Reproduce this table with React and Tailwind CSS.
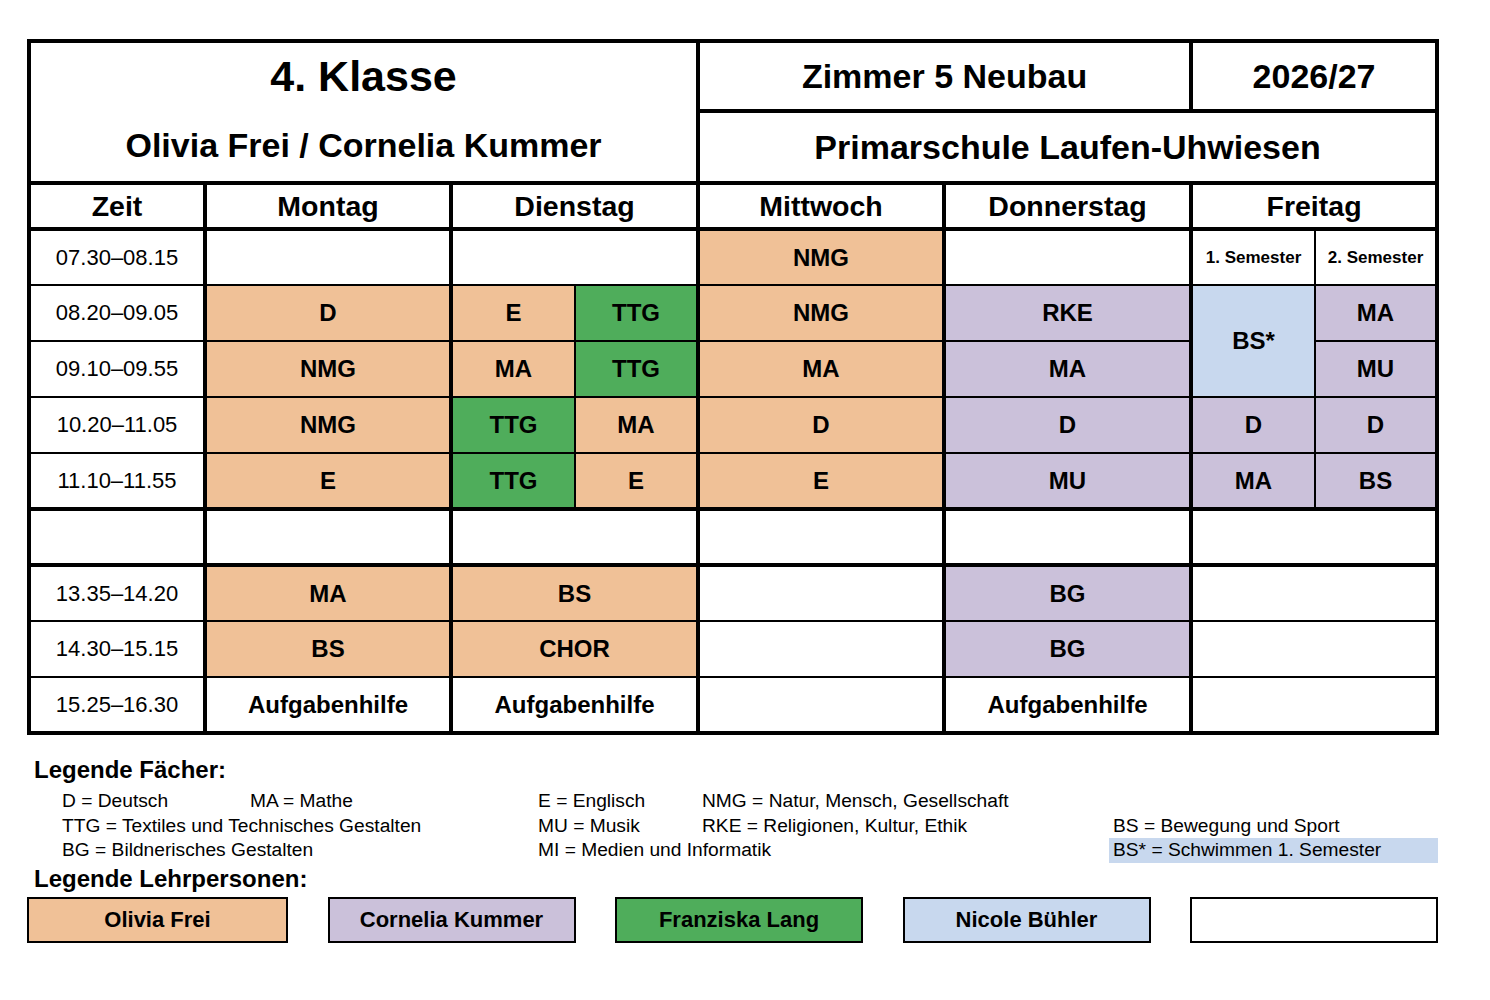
import React from "react";

// Stundenplan 4. Klasse - Primarschule Laufen-Uhwiesen

const O = "bg-[#f0c197]"; // Olivia Frei
const L = "bg-[#cbc1da]"; // Cornelia Kummer
const G = "bg-[#4fad5b]"; // Franziska Lang
const B = "bg-[#c8d8ee]"; // Nicole Bühler
const W = "bg-white";

// vertical borders: whole day column, left half, right half
const X = "border-x-4";
const XL = "border-l-4 border-r-2";
const XR = "border-l-2 border-r-4";

function Cell({ bg = W, x = X, thick, span, rows, small, children }) {
  return (
    <td
      colSpan={span}
      rowSpan={rows}
      className={`${x} ${thick ? "border-t-2 border-b-4" : "border-y-2"} border-black ${bg} text-center align-middle font-bold leading-none ${
        small ? "text-[17px]" : "text-[24px]"
      }`}
    >
      {children}
    </td>
  );
}

function Time({ children, thick }) {
  return (
    <td
      className={`border-x-4 ${thick ? "border-t-2 border-b-4" : "border-y-2"} border-black bg-white text-center align-middle text-[22px] leading-none h-[56px]`}
    >
      {children}
    </td>
  );
}

function Day({ span, children }) {
  return (
    <td colSpan={span} className="border-4 border-black text-center align-middle text-[28.5px] font-bold leading-none h-[46px]">
      {children}
    </td>
  );
}

function Timetable() {
  return (
    <table className="table-fixed border-collapse border-4 border-black w-[1412px]">
      <colgroup>
        <col className="w-[176px]" />
        <col className="w-[246px]" />
        <col className="w-[124px]" />
        <col className="w-[123px]" />
        <col className="w-[246px]" />
        <col className="w-[247px]" />
        <col className="w-[124px]" />
        <col className="w-[122px]" />
      </colgroup>
      <tbody>
        <tr>
          <td colSpan={4} rowSpan={2} className="border-4 border-black align-top p-0">
            <div className="h-[66px] flex items-center justify-center text-[43px] font-bold">4. Klasse</div>
            <div className="h-[72px] flex items-center justify-center text-[34px] font-bold">Olivia Frei / Cornelia Kummer</div>
          </td>
          <td colSpan={2} className="border-4 border-black text-center align-middle text-[34px] font-bold h-[70px] leading-none">
            Zimmer 5 Neubau
          </td>
          <td colSpan={2} className="border-4 border-black text-center align-middle text-[34px] font-bold leading-none">
            2026/27
          </td>
        </tr>
        <tr>
          <td colSpan={4} className="border-4 border-black text-center align-middle text-[34px] font-bold h-[72px] leading-none">
            Primarschule Laufen-Uhwiesen
          </td>
        </tr>
        <tr>
          <Day>Zeit</Day>
          <Day>Montag</Day>
          <Day span={2}>Dienstag</Day>
          <Day>Mittwoch</Day>
          <Day>Donnerstag</Day>
          <Day span={2}>Freitag</Day>
        </tr>

        <tr>
          <Time>07.30–08.15</Time>
          <Cell />
          <Cell span={2} />
          <Cell bg={O}>NMG</Cell>
          <Cell />
          <Cell x={XL} small>1. Semester</Cell>
          <Cell x={XR} small>2. Semester</Cell>
        </tr>
        <tr>
          <Time>08.20–09.05</Time>
          <Cell bg={O}>D</Cell>
          <Cell bg={O} x={XL}>E</Cell>
          <Cell bg={G} x={XR}>TTG</Cell>
          <Cell bg={O}>NMG</Cell>
          <Cell bg={L}>RKE</Cell>
          <Cell bg={B} x={XL} rows={2}>BS*</Cell>
          <Cell bg={L} x={XR}>MA</Cell>
        </tr>
        <tr>
          <Time>09.10–09.55</Time>
          <Cell bg={O}>NMG</Cell>
          <Cell bg={O} x={XL}>MA</Cell>
          <Cell bg={G} x={XR}>TTG</Cell>
          <Cell bg={O}>MA</Cell>
          <Cell bg={L}>MA</Cell>
          <Cell bg={L} x={XR}>MU</Cell>
        </tr>
        <tr>
          <Time>10.20–11.05</Time>
          <Cell bg={O}>NMG</Cell>
          <Cell bg={G} x={XL}>TTG</Cell>
          <Cell bg={O} x={XR}>MA</Cell>
          <Cell bg={O}>D</Cell>
          <Cell bg={L}>D</Cell>
          <Cell bg={L} x={XL}>D</Cell>
          <Cell bg={L} x={XR}>D</Cell>
        </tr>
        <tr>
          <Time thick>11.10–11.55</Time>
          <Cell bg={O} thick>E</Cell>
          <Cell bg={G} x={XL} thick>TTG</Cell>
          <Cell bg={O} x={XR} thick>E</Cell>
          <Cell bg={O} thick>E</Cell>
          <Cell bg={L} thick>MU</Cell>
          <Cell bg={L} x={XL} thick>MA</Cell>
          <Cell bg={L} x={XR} thick>BS</Cell>
        </tr>
        <tr>
          <Time thick></Time>
          <Cell thick />
          <Cell span={2} thick />
          <Cell thick />
          <Cell thick />
          <Cell span={2} thick />
        </tr>
        <tr>
          <Time>13.35–14.20</Time>
          <Cell bg={O}>MA</Cell>
          <Cell bg={O} span={2}>BS</Cell>
          <Cell />
          <Cell bg={L}>BG</Cell>
          <Cell span={2} />
        </tr>
        <tr>
          <Time>14.30–15.15</Time>
          <Cell bg={O}>BS</Cell>
          <Cell bg={O} span={2}>CHOR</Cell>
          <Cell />
          <Cell bg={L}>BG</Cell>
          <Cell span={2} />
        </tr>
        <tr>
          <Time>15.25–16.30</Time>
          <Cell>Aufgabenhilfe</Cell>
          <Cell span={2}>Aufgabenhilfe</Cell>
          <Cell />
          <Cell>Aufgabenhilfe</Cell>
          <Cell span={2} />
        </tr>
      </tbody>
    </table>
  );
}

function Legend() {
  return (
    <div className="mt-[22px]">
      <div className="ml-[7px] text-[24px] font-bold leading-[26px]">Legende Fächer:</div>
      <div className="mt-[6px] ml-[35px] grid grid-cols-[188px_288px_164px_407px_329px] text-[19.2px] leading-[24.5px]">
        <div>D = Deutsch</div>
        <div>MA = Mathe</div>
        <div>E = Englisch</div>
        <div>NMG = Natur, Mensch, Gesellschaft</div>
        <div></div>

        <div className="col-span-2">TTG = Textiles und Technisches Gestalten</div>
        <div>MU = Musik</div>
        <div>RKE = Religionen, Kultur, Ethik</div>
        <div className="pl-1">BS = Bewegung und Sport</div>

        <div className="col-span-2">BG = Bildnerisches Gestalten</div>
        <div className="col-span-2">MI = Medien und Informatik</div>
        <div className={`pl-1 ${B}`}>BS* = Schwimmen 1. Semester</div>
      </div>
      <div className="mt-[3px] ml-[7px] text-[24px] font-bold leading-[26px]">Legende Lehrpersonen:</div>
      <div className="mt-[5px] flex gap-[39.5px] text-[22px] font-bold">
        <div className={`w-[261px] h-[46px] border-2 border-black ${O} flex items-center justify-center`}>Olivia Frei</div>
        <div className={`w-[248px] h-[46px] border-2 border-black ${L} flex items-center justify-center`}>Cornelia Kummer</div>
        <div className={`w-[248px] h-[46px] border-2 border-black ${G} flex items-center justify-center`}>Franziska Lang</div>
        <div className={`w-[248px] h-[46px] border-2 border-black ${B} flex items-center justify-center`}>Nicole Bühler</div>
        <div className="w-[248px] h-[46px] border-2 border-black bg-white"></div>
      </div>
    </div>
  );
}

export default function App() {
  return (
    <div className="w-[1490px] h-[1000px] bg-white text-black pl-[27px] pt-[39px] font-['Liberation_Sans',Arial,sans-serif]">
      <Timetable />
      <Legend />
    </div>
  );
}
